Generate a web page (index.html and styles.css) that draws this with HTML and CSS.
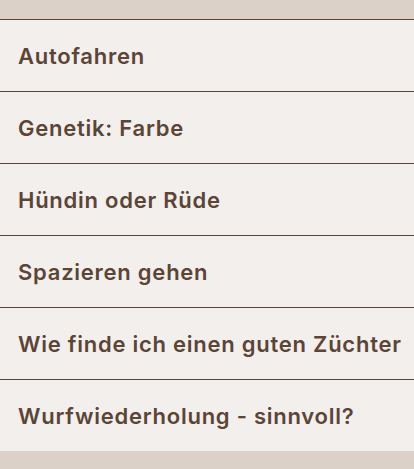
FILE: index.html
```html
<!DOCTYPE html>
<html lang="de">
<head>
<meta charset="utf-8">
<link rel="stylesheet" href="styles.css">
</head>
<body>
<div class="page">
  <ul class="list">
    <li class="item">Autofahren</li>
    <li class="item">Genetik: Farbe</li>
    <li class="item">Hündin oder Rüde</li>
    <li class="item">Spazieren gehen</li>
    <li class="item">Wie finde ich einen guten Züchter</li>
    <li class="item">Wurfwiederholung - sinnvoll?</li>
  </ul>
</div>
</body>
</html>
```
FILE: styles.css
```css
html, body {
  margin: 0;
  padding: 0;
  background: #dbd1c8;
}
.page {
  padding: 19px 0 18px;
}
.list {
  list-style: none;
  margin: 0;
  padding: 0;
  background: #f3efec;
}
.item {
  height: 71px;
  display: flex;
  align-items: center;
  padding: 0 18px;
  border-top: 1px solid #5a4639;
  font-family: Inter, "Liberation Sans", sans-serif;
  font-weight: 600;
  font-size: 22px;
  letter-spacing: 0.75px;
  color: #5b4537;
  white-space: nowrap;
}
```
